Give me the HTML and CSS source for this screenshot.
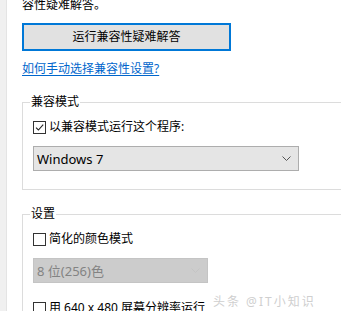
FILE: index.html
```html
<!DOCTYPE html>
<html lang="zh-CN">
<head>
<meta charset="utf-8">
<link rel="stylesheet" href="styles.css">
</head>
<body>
<div class="page">
  <div class="strip"></div>
  <div class="content">
    <div class="intro">容性疑难解答。</div>
    <div class="btn">运行兼容性疑难解答</div>
    <a class="link" href="#">如何手动选择兼容性设置?</a>

    <fieldset class="group g1">
      <legend>兼容模式</legend>
      <div class="row">
        <span class="cb checked"><svg viewBox="0 0 11 11" width="11" height="11"><path d="M2 5.6 L4.4 8 L9.2 2.6" fill="none" stroke="#222" stroke-width="1.1"/></svg></span>
        <span class="label">以兼容模式运行这个程序:</span>
      </div>
      <div class="select sel1">
        <span class="val">Windows 7</span>
        <svg class="chev" viewBox="0 0 9 5" width="9" height="5"><path d="M0.5 0.5 L4.5 4.5 L8.5 0.5" fill="none" stroke="#555" stroke-width="1"/></svg>
      </div>
    </fieldset>

    <fieldset class="group g2">
      <legend>设置</legend>
      <div class="row">
        <span class="cb"></span>
        <span class="label">简化的颜色模式</span>
      </div>
      <div class="select sel2 disabled">
        <span class="val">8 位(256)色</span>
        <svg class="chev" viewBox="0 0 9 5" width="9" height="5"><path d="M0.5 0.5 L4.5 4.5 L8.5 0.5" fill="none" stroke="#c4c4c4" stroke-width="1"/></svg>
      </div>
      <div class="row r3">
        <span class="cb"></span>
        <span class="label">用 640 x 480 屏幕分辨率运行</span>
      </div>
    </fieldset>
  </div>
  <div class="watermark">头条 @IT小知识</div>
</div>
</body>
</html>
```

FILE: styles.css
```css
html, body {
  margin: 0;
  padding: 0;
  background: #ffffff;
}
body {
  width: 341px;
  height: 311px;
  overflow: hidden;
  font-family: "Noto Sans", "Noto Sans CJK SC", sans-serif;
  font-size: 12px;
  color: #000;
}
.page {
  position: relative;
  display: flex;
  height: 311px;
  overflow: hidden;
}
.strip {
  flex: 0 0 6px;
  background: #f0f0f0;
  border-right: 1px solid #e4e4e4;
}
.content {
  flex: 0 0 auto;
  width: 420px;
  padding-left: 15px;
  margin-top: -3px;
}
.intro {
  line-height: 16px;
  height: 16px;
}
.btn {
  margin-top: 10px;
  width: 205px;
  height: 24px;
  border: 2px solid #0078d7;
  background: #e1e1e1;
  text-align: center;
  line-height: 24px;
}
.link {
  display: inline-block;
  margin-top: 10px;
  line-height: 16px;
  color: #0066cc;
  text-decoration: underline;
  text-underline-offset: 2px;
}
.group {
  margin: 0;
  padding: 0 0 0 10px;
  border: 1px solid #dcdcdc;
  min-width: 0;
}
.group legend {
  margin-left: -3px;
  padding: 0 1px;
  line-height: 16px;
}
.g1 {
  margin-top: 17px;
  padding-bottom: 18px;
}
.g2 {
  margin-top: 16px;
  padding-bottom: 20px;
}
.row {
  display: flex;
  align-items: center;
  height: 16px;
  margin-top: 9px;
}
.r3 {
  margin-top: 17px;
}
.cb {
  box-sizing: border-box;
  width: 13px;
  height: 13px;
  border: 1px solid #333;
  background: #fff;
  margin-right: 3px;
  display: flex;
  align-items: center;
  justify-content: center;
}
.label {
  line-height: 16px;
}
.select {
  box-sizing: border-box;
  margin-top: 11px;
  height: 25px;
  border: 1px solid #adadad;
  background: #e5e5e5;
  display: flex;
  align-items: center;
  justify-content: space-between;
  padding: 0 5px 0 3px;
}
.sel1 {
  width: 266px;
}
.sel2 {
  width: 175px;
}
.select .val {
  font-size: 13px;
  line-height: 16px;
}
.select.disabled {
  background: #cccccc;
  border-color: #c4c4c4;
  color: #838383;
}
.chev {
  display: block;
  margin-right: 2px;
}
.watermark {
  position: absolute;
  left: 213px;
  top: 295px;
  font-size: 12px;
  line-height: 14px;
  color: #cfcfcf;
  letter-spacing: 2px;
}
```
